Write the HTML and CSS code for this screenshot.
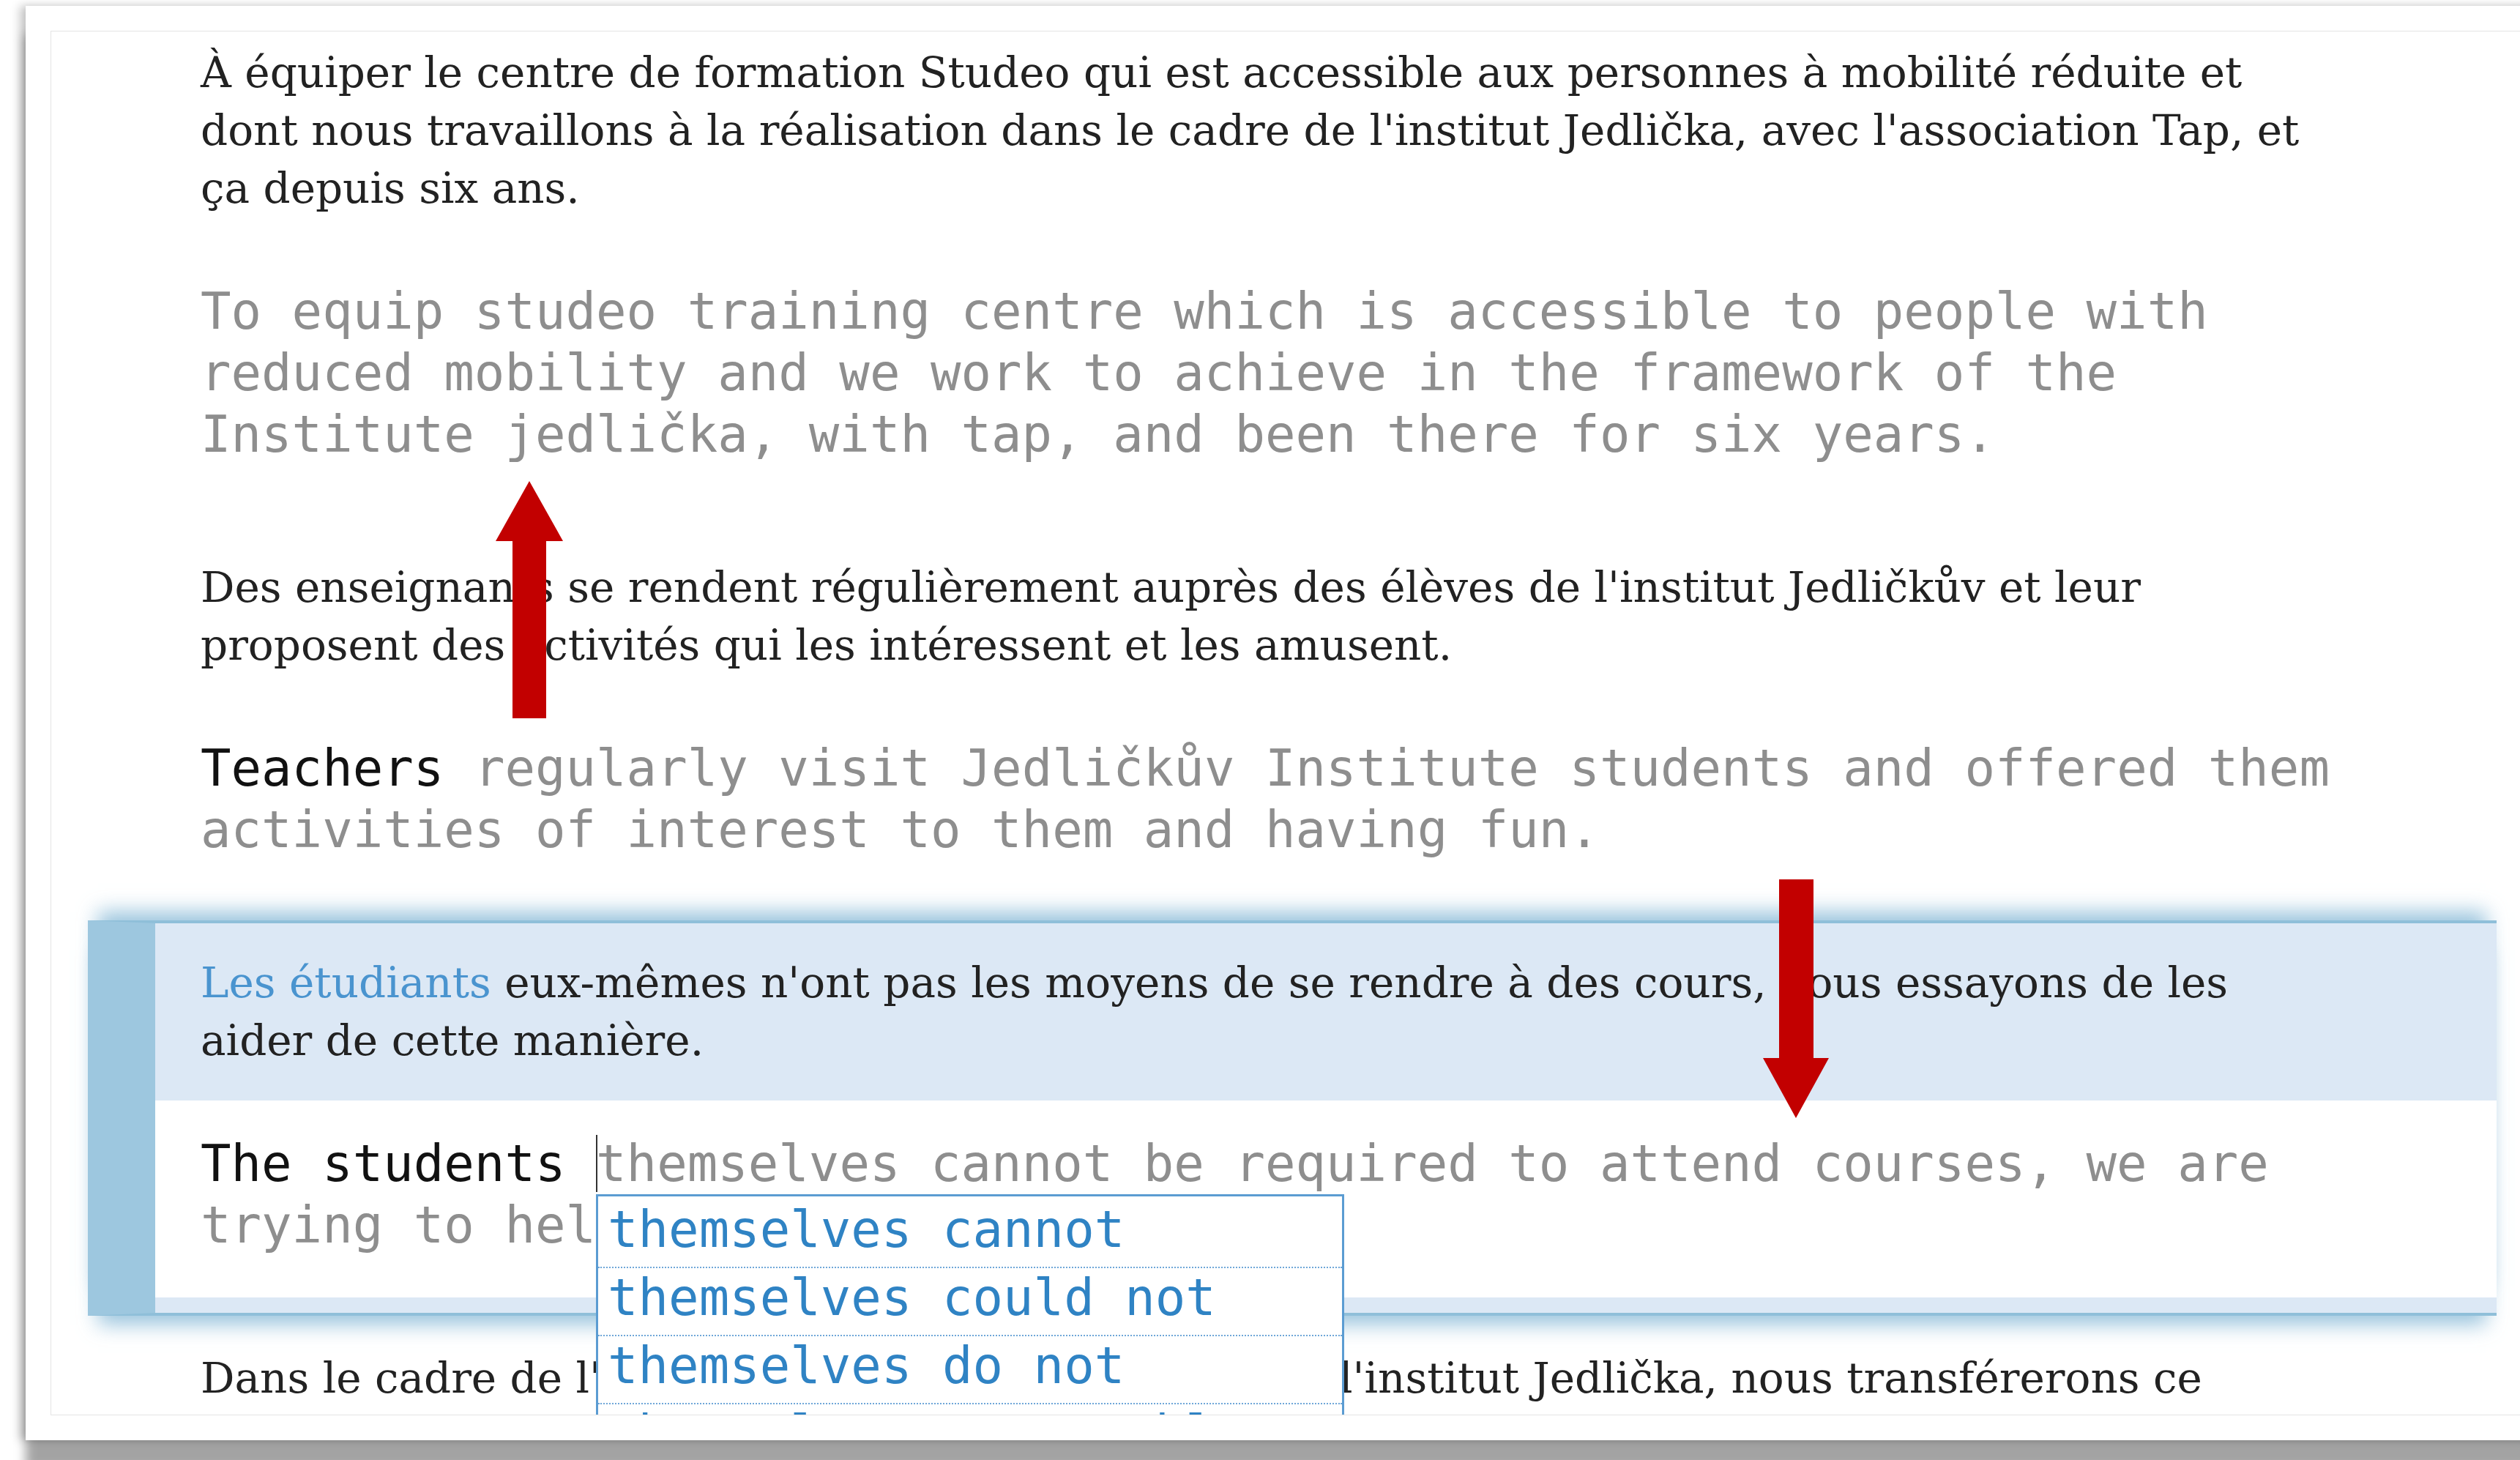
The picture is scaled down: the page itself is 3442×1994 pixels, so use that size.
FILE: index.html
```html
<!DOCTYPE html>
<html lang="fr">
<head>
<meta charset="utf-8">
<title>Studeo – traduction</title>
<link rel="stylesheet" href="styles.css">
</head>
<body>
<div class="window">
  <div class="editor">
    <div class="segments">

      <section class="seg">
        <p class="src">À équiper le centre de formation Studeo qui est accessible aux personnes à mobilité réduite et<br>dont nous travaillons à la réalisation dans le cadre de l'institut Jedlička, avec l'association Tap, et<br>ça depuis six ans.</p>
        <p class="tgt"><span class="ghost">To equip studeo training centre which is accessible to people with<br>reduced mobility and we work to achieve in the framework of the<br>Institute jedlička, with tap, and been there for six years.</span></p>
      </section>

      <section class="seg">
        <p class="src">Des enseignants se rendent régulièrement auprès des élèves de l'institut Jedličkův et leur<br>proposent des activités qui les intéressent et les amusent.</p>
        <p class="tgt"><span class="typed">Teachers</span><span class="ghost"> regularly visit Jedličkův Institute students and offered them<br>activities of interest to them and having fun.</span></p>
      </section>

      <section class="seg seg--active">
        <p class="src"><span class="term">Les étudiants</span> eux-mêmes n'ont pas les moyens de se rendre à des cours, nous essayons de les<br>aider de cette manière.</p>
        <div class="tgt">
          <span class="typed">The students </span><span class="caret"></span><span class="ghost">themselves cannot be required to attend courses, we are<br>trying to help them in this way.</span>
          <ul class="suggest">
            <li>themselves cannot</li>
            <li>themselves could not</li>
            <li>themselves do not</li>
            <li>themselves are unable to</li>
          </ul>
        </div>
      </section>

      <section class="seg">
        <p class="src">Dans le cadre de l'association Tap et en accord avec l'institut Jedlička, nous transférerons ce<br>projet aux élèves qui souhaitent poursuivre leur formation.</p>
        <p class="tgt"><span class="ghost">As part of the Tap association and the Jedlička Institute, we will transfer this</span></p>
      </section>

    </div>
  </div>
</div>

<svg class="arrow arrow--up" width="92" height="324" viewBox="0 0 92 324" aria-hidden="true">
  <path d="M46 0 L92 82 L69 82 L69 324 L23 324 L23 82 L0 82 Z"/>
</svg>
<svg class="arrow arrow--down" width="90" height="326" viewBox="0 0 90 326" aria-hidden="true">
  <path d="M22 0 L69 0 L69 244 L90 244 L45 326 L0 244 L22 244 Z"/>
</svg>
</body>
</html>
```

FILE: styles.css
```css
html,
body {
  margin: 0;
  padding: 0;
  background: #fff;
  overflow: hidden;
}

body {
  position: relative;
  width: 3442px;
  height: 1994px;
}

/* application window with its drop shadow */
.window {
  margin: 8px 0 0 35px;
  width: 3392px;
  height: 1891px;
  padding: 34px;
  background: #fff;
  box-shadow:
    0 40px 14px rgba(0, 0, 0, 0.36),
    -8px 0 12px rgba(0, 0, 0, 0.22),
    0 0 8px rgba(0, 0, 0, 0.05);
}

.editor {
  height: 1891px;
  box-sizing: border-box;
  border: 1px solid #e4e4e4;
  overflow: hidden;
}

.segments {
  margin-top: -29px;
}

/* one source/target pair */
.seg {
  margin: 0 50px;
  border-left: 92px solid transparent;
  border-top: 4px solid transparent;
  border-bottom: 4px solid transparent;
  padding-bottom: 21px;
}

.seg--active {
  background: #dce8f5;
  border-top-color: #8fbfd9;
  border-bottom-color: #8fbfd9;
  border-left-color: #9dc7df;
  box-shadow:
    0 -26px 26px -14px rgba(120, 176, 210, 0.75),
    0 26px 26px -14px rgba(120, 176, 210, 0.75);
}

.src {
  margin: 0;
  padding: 42px 62px;
  font-family: "DejaVu Serif", "Liberation Serif", serif;
  font-size: 58px;
  line-height: 79px;
  color: #222;
  white-space: nowrap;
}

.term {
  color: #4a94cf;
}

.tgt {
  position: relative;
  margin: 0;
  padding: 44px 62px 57px;
  font-family: "DejaVu Sans Mono", "Liberation Mono", monospace;
  font-size: 69px;
  line-height: 84px;
  white-space: nowrap;
}

.seg--active .tgt {
  background: #fff;
}

.typed {
  color: #111;
}

.ghost {
  color: #8e8e8e;
}

.caret {
  display: inline-block;
  width: 2px;
  height: 78px;
  margin-right: -2px;
  vertical-align: -15px;
  background: #333;
}

/* autocomplete list under the caret */
.suggest {
  position: absolute;
  top: 128px;
  left: calc(62px + 13ch);
  width: 1022px;
  box-sizing: border-box;
  margin: 0;
  padding: 5px 0 0;
  list-style: none;
  background: #fff;
  border: 3px solid #5b9cd2;
  border-bottom: none;
  font-family: "DejaVu Sans Mono", "Liberation Mono", monospace;
  font-size: 69px;
  line-height: 80px;
  color: #2f83c4;
}

.suggest li {
  padding: 0 13px 11px;
  border-bottom: 2px dotted #6fa7d8;
}

/* red annotation arrows */
.arrow {
  position: absolute;
  fill: #c20000;
}

.arrow--up {
  left: 677px;
  top: 657px;
}

.arrow--down {
  left: 2408px;
  top: 1201px;
}
```
